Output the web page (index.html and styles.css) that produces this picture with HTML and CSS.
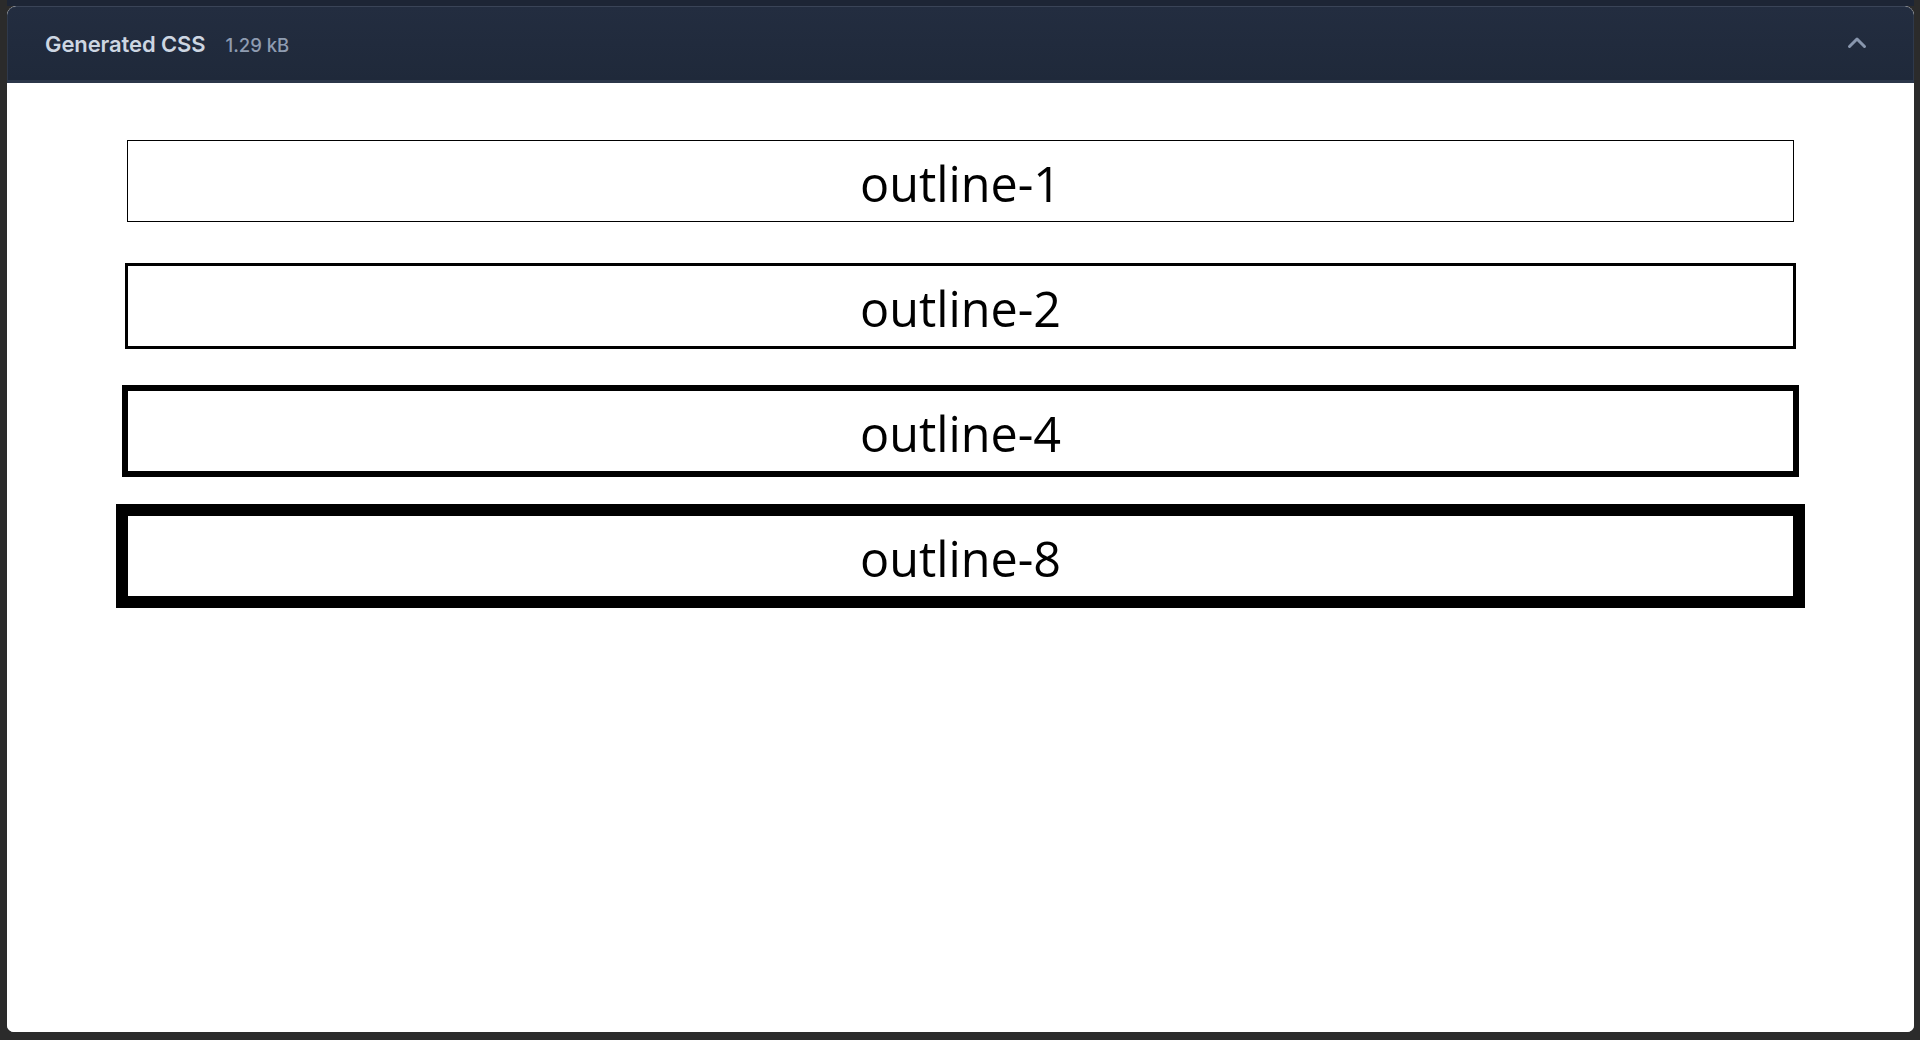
FILE: index.html
```html
<!DOCTYPE html>
<html lang="en">
<head>
<meta charset="utf-8">
<title>Generated CSS</title>
<link rel="stylesheet" href="styles.css">
</head>
<body>
<div class="stage">
  <section class="panel">
    <header class="panel-head">
      <div class="head-title">
        <span class="title">Generated CSS</span>
        <span class="size">1.29 kB</span>
      </div>
      <svg class="chevron" width="20" height="13" viewBox="0 0 20 13" aria-hidden="true">
        <polyline points="2.5,10.5 10,3 17.5,10.5" fill="none" stroke="#8896ad" stroke-width="3" stroke-linecap="round" stroke-linejoin="round"/>
      </svg>
    </header>
    <div class="preview">
      <div class="demo o1">outline-1</div>
      <div class="demo o2">outline-2</div>
      <div class="demo o4">outline-4</div>
      <div class="demo o8">outline-8</div>
    </div>
  </section>
</div>
</body>
</html>
```

FILE: styles.css
```css
html, body {
  margin: 0;
  padding: 0;
  height: 100%;
}
body {
  background: #2b2b2b;
  padding-left: 7px;
  padding-right: 6px;
  padding-bottom: 8px;
  box-sizing: border-box;
  overflow: hidden;
}
.stage {
  height: 100%;
  background: linear-gradient(#1d2535 0, #1d2535 6px, #2b2b2b 6px);
  padding-top: 6px;
  box-sizing: border-box;
  display: flex;
  flex-direction: column;
}
.panel {
  flex: 1;
  display: flex;
  flex-direction: column;
  border-radius: 9px 9px 7px 7px;
  overflow: hidden;
  background: #ffffff;
}
.panel-head {
  height: 77px;
  box-sizing: border-box;
  display: flex;
  align-items: center;
  justify-content: space-between;
  padding: 0 46px 0 37px;
  background: linear-gradient(#232d40, #1f293a);
  border-top: 1px solid #3a4457;
  border-left: 1px solid #2f394b;
  border-right: 1px solid #2f394b;
  border-bottom: 3px solid #2b3649;
  border-radius: 9px 9px 0 0;
  font-family: Inter, "Liberation Sans", sans-serif;
}
.head-title {
  display: flex;
  align-items: baseline;
  gap: 20px;
}
.title {
  font-size: 22px;
  font-weight: 600;
  color: #cdd6e2;
  letter-spacing: -0.1px;
}
.size {
  font-size: 18.5px;
  font-weight: 500;
  color: #8f9cb1;
}
.chevron {
  display: block;
  margin-top: -2px;
}
.preview {
  flex: 1;
  background: #ffffff;
  padding: 58px 121px 0 121px;
  display: flex;
  flex-direction: column;
  gap: 45px;
}
.demo {
  height: 80px;
  box-sizing: border-box;
  padding-top: 5px;
  text-align: center;
  font-family: "Open Sans", "Noto Sans", sans-serif;
  font-size: 48.5px;
  line-height: 75px;
  color: #000000;
  outline-style: solid;
  outline-color: #000000;
}
.o1 { outline-width: 1px; }
.o2 { outline-width: 3px; }
.o4 { outline-width: 6px; }
.o8 { outline-width: 12px; }
```
